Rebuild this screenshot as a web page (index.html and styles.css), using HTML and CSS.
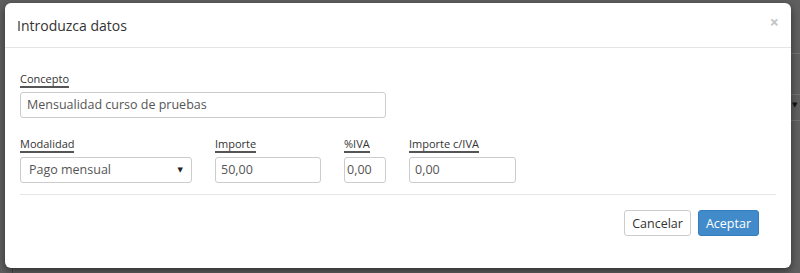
FILE: index.html
```html
<!DOCTYPE html>
<html lang="es">
<head>
<meta charset="utf-8">
<title>Introduzca datos</title>
<link rel="stylesheet" href="styles.css">
</head>
<body>
<div class="backdrop">
  <div class="bg-line l1"></div>
  <div class="bg-line l2"></div>
  <div class="bg-line l3"></div>
  <div class="bg-caret">▼</div>
  <div class="bg-vline"></div>
</div>
<div class="modal">
  <div class="modal-header">
    <h4 class="modal-title">Introduzca datos</h4>
    <span class="close">×</span>
  </div>
  <div class="modal-body">
    <div class="field">
      <label class="lbl">Concepto</label>
      <div class="input w-concepto">Mensualidad curso de pruebas</div>
    </div>
    <div class="row">
      <div class="field">
        <label class="lbl">Modalidad</label>
        <div class="input select w-modalidad"><span>Pago mensual</span><span class="caret">▼</span></div>
      </div>
      <div class="field">
        <label class="lbl">Importe</label>
        <div class="input w-importe">50,00</div>
      </div>
      <div class="field">
        <label class="lbl">%IVA</label>
        <div class="input w-iva">0,00</div>
      </div>
      <div class="field">
        <label class="lbl">Importe c/IVA</label>
        <div class="input w-total">0,00</div>
      </div>
    </div>
    <div class="footer">
      <button class="btn btn-default">Cancelar</button>
      <button class="btn btn-primary">Aceptar</button>
    </div>
  </div>
</div>
</body>
</html>
```
FILE: styles.css
```css
* { box-sizing: border-box; }
html, body { margin: 0; padding: 0; }
body {
  width: 800px;
  height: 273px;
  overflow: hidden;
  background: #606060;
  font-family: "Open Sans", "DejaVu Sans", sans-serif;
  color: #333;
  position: relative;
}
.backdrop { position: absolute; inset: 0; }
.bg-line { position: absolute; left: 790px; right: 0; height: 1px; background: #747474; }
.l1 { top: 53px; }
.l2 { top: 94px; }
.l3 { top: 120px; }
.bg-caret { position: absolute; left: 792px; top: 100px; font-size: 7px; color: #111; }
.bg-vline { position: absolute; left: 12px; top: 266px; width: 1px; height: 7px; background: #4a4a4a; }

.modal {
  position: relative;
  margin: 3px 0 0 5px;
  width: 786px;
  height: 265px;
  background: #fff;
  border-radius: 6px;
  box-shadow: 0 3px 9px rgba(0,0,0,.5);
}
.modal-header {
  height: 45px;
  border-bottom: 1px solid #e5e5e5;
  display: flex;
  align-items: center;
  justify-content: space-between;
  padding: 0 12px 0 12px;
}
.modal-title {
  margin: 0;
  font-size: 14px;
  font-weight: 400;
  color: #333;
}
.close {
  font-size: 16px;
  font-weight: 700;
  color: #c4c4c4;
  margin-top: -6px;
  line-height: 1;
}
.modal-body { padding: 23px 15px 0 15px; }
.field { display: flex; flex-direction: column; align-items: flex-start; }
.lbl {
  font-size: 11px;
  line-height: 15px;
  border-bottom: 2px solid #555;
  margin-bottom: 4px;
}
.input {
  height: 26px;
  border: 1px solid #ccc;
  border-radius: 3px;
  font-size: 12.5px;
  line-height: 24px;
  padding: 0 5px;
  color: #555;
}
.w-concepto { width: 366px; padding-left: 6px; }
.row { display: flex; gap: 23px; margin-top: 18px; }
.select { display: flex; justify-content: space-between; align-items: center; padding: 0 8px; }
.caret { font-size: 7px; color: #222; }
.w-modalidad { width: 172px; }
.w-importe { width: 106px; }
.w-iva { width: 42px; padding: 0 2px; }
.w-total { width: 107px; }
.footer {
  margin-top: 11px;
  border-top: 1px solid #e5e5e5;
  padding-top: 15px;
  display: flex;
  justify-content: flex-end;
  gap: 7px;
  padding-right: 17px;
}
.btn {
  height: 26px;
  font-family: inherit;
  font-size: 12.5px;
  border-radius: 3px;
  padding: 0 7px;
  border: 1px solid #ccc;
  cursor: pointer;
}
.btn-default { background: #fff; color: #333; }
.btn-primary { background: #428bca; border-color: #357ebd; color: #fff; }
```
